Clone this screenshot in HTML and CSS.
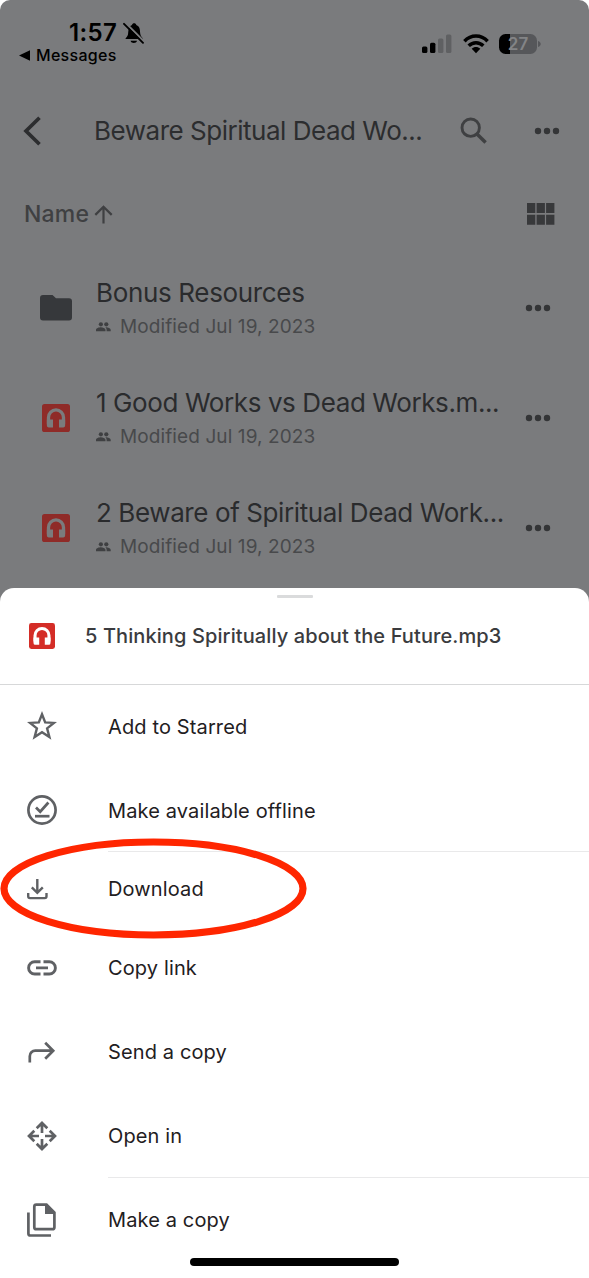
FILE: index.html
```html
<!DOCTYPE html>
<html lang="en">
<head>
<meta charset="utf-8">
<title>Drive</title>
<link rel="stylesheet" href="styles.css">
</head>
<body>
<svg class="defs" aria-hidden="true">
  <symbol id="dots" viewBox="0 0 26 8"><circle cx="4" cy="4" r="3.2"/><circle cx="13" cy="4" r="3.2"/><circle cx="22" cy="4" r="3.2"/></symbol>
  <symbol id="people" viewBox="0 0 15 10"><circle cx="4.9" cy="2.3" r="2.1"/><circle cx="10.3" cy="2.3" r="2.1"/><path d="M0 9.2V7.8C0 6.2 3 5.3 4.9 5.3s4.6.9 4.6 2.5v1.4zM10.600 9.200V7.800c0-1-.4-1.800-1.100-2.400 2-.2 5.200.7 5.200 2.400v1.400z"/></symbol>
  <symbol id="audio" viewBox="0 0 28 28"><rect width="28" height="28" rx="2.6" fill="var(--tile)"/><path d="M6.500 20V13.400a7.500 7.500 0 0 1 15 0V20" fill="none" stroke="var(--mark)" stroke-width="3.300"/><path d="M4.850 15.500H11v8H6.850a2 2 0 0 1-2-2zM17 15.500h6.150v6a2 2 0 0 1-2 2H17z" fill="var(--mark)"/></symbol>
</svg>
<div class="screen">
  <header class="status">
    <div class="status-left">
      <div class="clock"><span class="time">1:57</span>
        <svg width="22" height="23" viewBox="0 0 22 23"><path d="M2.500 17c0-1.500 2-2 2.500-4.500C5.700 8 5 4.500 9 3c.3-2.500 4-2.500 4.300 0 4 1.500 3.500 5 4 9 .3 2.500 2.500 3.500 2.500 5zM7.600 18.700h6.400c-.5 3-5.900 3-6.400 0z" fill="#000"/><path d="M2.400.8l19 19" stroke="#7a7b7d" stroke-width="2"/><path d="M1 1.800l19 19" stroke="#000" stroke-width="1.900" stroke-linecap="round"/></svg>
      </div>
      <div class="back-app"><svg width="12" height="11" viewBox="0 0 12 11"><path d="M0 5.500L11 .3v10.400z"/></svg><span class="msgs">Messages</span></div>
    </div>
    <div class="status-right">
      <svg width="30" height="20" viewBox="0 0 30 20"><rect x="0" y="12.500" width="5.400" height="6.500" rx="1.500"/><rect x="8" y="8.700" width="5.400" height="10.300" rx="1.500"/><g fill="#5f6062"><rect x="16" y="4.500" width="5.400" height="14.500" rx="1.500"/><rect x="24" y=".5" width="5.400" height="18.500" rx="1.500"/></g></svg>
      <svg class="wifi" width="26" height="20" viewBox="0 0 26 20"><g fill="none" stroke="#000" stroke-width="3.500"><path d="M1.400 7.200c6.500-6.800 16.700-6.800 23.200 0"/><path d="M5.700 11.700c4.200-4.100 10.400-4.100 14.600 0"/></g><path d="M8.700 14.700c2.400-2.200 6.200-2.200 8.600 0L13 19.200z"/></svg>
      <div class="battery"><span class="battery-level">27</span></div>
      <svg class="battery-tip" width="3" height="6" viewBox="0 0 3 6"><path d="M0 0c3.600 1 3.600 5 0 6z" fill="#56575a"/></svg>
    </div>
  </header>
  <div class="titlebar">
    <svg class="chevron" width="19" height="30" viewBox="0 0 19 30"><path d="M16.500 1.800L3 15l13.500 13.200" fill="none" stroke="#2c2d2f" stroke-width="3.700"/></svg>
    <h1 class="title">Beware Spiritual Dead Wo...</h1>
    <svg class="search" width="28" height="28" viewBox="0 0 28 28"><circle cx="10.700" cy="10.700" r="8.700" fill="none" stroke="#3f4042" stroke-width="2.900"/><path d="M17 17l8.600 8.600" stroke="#3f4042" stroke-width="3.500"/></svg>
    <svg class="more" width="26" height="8"><use href="#dots"/></svg>
  </div>
  <div class="sortbar">
    <span class="sort">Name</span>
    <svg width="19" height="19" viewBox="0 0 19 19"><path d="M9.500 18.500V2M1.300 9.900L9.500 1.700l8.200 8.200" fill="none" stroke="#3f4042" stroke-width="2.200"/></svg>
    <svg class="grid" width="28" height="22" viewBox="0 0 28 22"><path d="M0 0h8.300v10H0zM9.600 0h8.300v10H9.600zM19.100 0h8.300v10h-8.300zM0 11.700h8.300v10H0zM9.600 11.700h8.300v10H9.600zM19.100 11.700h8.300v10h-8.300z" fill="#38393b"/></svg>
  </div>
  <main class="files">
    <div class="file">
      <svg class="file-icon" width="32" height="26" viewBox="0 0 32 26"><path d="M3 0h9.500L16 3.200h13a3 3 0 0 1 3 3V22.500a3 3 0 0 1-3 3H3a3 3 0 0 1-3-3V3a3 3 0 0 1 3-3z" fill="#36383b"/></svg>
      <div class="file-text"><div class="name n0">Bonus Resources</div><div class="meta"><svg width="15" height="10"><use href="#people"/></svg><span>Modified Jul 19, 2023</span></div></div>
      <svg class="row-more" width="26" height="8"><use href="#dots"/></svg>
    </div>
    <div class="file">
      <svg class="file-icon" width="28" height="28"><use href="#audio"/></svg>
      <div class="file-text"><div class="name">1 Good Works vs Dead Works.m...</div><div class="meta"><svg width="15" height="10"><use href="#people"/></svg><span>Modified Jul 19, 2023</span></div></div>
      <svg class="row-more" width="26" height="8"><use href="#dots"/></svg>
    </div>
    <div class="file">
      <svg class="file-icon" width="28" height="28"><use href="#audio"/></svg>
      <div class="file-text"><div class="name">2 Beware of Spiritual Dead Work...</div><div class="meta"><svg width="15" height="10"><use href="#people"/></svg><span>Modified Jul 19, 2023</span></div></div>
      <svg class="row-more" width="26" height="8"><use href="#dots"/></svg>
    </div>
  </main>
  <section class="sheet">
    <div class="handle"></div>
    <div class="sheet-head"><svg width="26" height="26" viewBox="0 0 28 28"><use href="#audio"/></svg><h2 class="sheet-title">5 Thinking Spiritually about the Future.mp3</h2></div>
    <div class="item"><span class="ico raised"><svg width="30" height="29" viewBox="0 0 30 29"><path d="M15 3.300l3.200 8.100 8.700.5-6.800 5.500 2.300 8.600-7.400-4.800L7.600 26l2.300-8.600-6.800-5.500 8.700-.5z" fill="none" stroke="#5f6164" stroke-width="2.400"/></svg></span><span class="label">Add to Starred</span></div>
    <div class="item ruled"><span class="ico raised"><svg width="30" height="30" viewBox="0 0 30 30" fill="none" stroke="#5f6164"><circle cx="15" cy="15" r="13.600" stroke-width="2.700"/><path d="M9 12.500l4.200 4.200 8.200-9.200" stroke-width="2.700"/><path d="M8 21.200h14.500" stroke-width="2.700"/></svg></span><span class="label">Make available offline</span></div>
    <div class="item short"><span class="ico"><svg width="22" height="22" viewBox="0 0 22 22" fill="none" stroke="#5f6164" stroke-width="2.400"><path d="M10.300 1v13.500M4.800 9.300l5.500 5.500 5.500-5.500M1.200 15v3.300a1.800 1.800 0 0 0 1.800 1.800h14.700a1.800 1.800 0 0 0 1.800-1.800V15"/></svg></span><span class="label">Download</span>
      <svg class="ring" width="308" height="102" viewBox="0 0 308 102"><ellipse cx="153.500" cy="50.500" rx="149.500" ry="46.500" fill="none" stroke="#ff2600" stroke-width="7.200"/></svg></div>
    <div class="item"><span class="ico"><svg width="30" height="16" viewBox="0 0 30 16" fill="none" stroke="#5f6164" stroke-width="2.900"><path d="M13.500 1.800H7.700a6 6 0 0 0 0 12.200h5.800M16.500 1.800h5.800a6 6 0 0 1 0 12.200h-5.800M9 7.900h12"/></svg></span><span class="label">Copy link</span></div>
    <div class="item"><span class="ico"><svg width="30" height="22" viewBox="0 0 30 22" fill="none" stroke="#5f6164" stroke-width="2.700"><path d="M2.800 21.500v-6.300a5.500 5.500 0 0 1 5.500-5.500H26M18.200 1.700l8 8-8 8"/></svg></span><span class="label">Send a copy</span></div>
    <div class="item ruled last-rule"><span class="ico"><svg width="30" height="30" viewBox="0 0 30 30" fill="none" stroke="#5f6164" stroke-width="2.700"><path d="M15 12V2M9.700 7.300L15 2l5.300 5.300M15 18v10M9.700 22.700L15 28l5.300-5.300M12 15H2M7.300 9.700L2 15l5.300 5.300M18 15h10M22.700 9.700L28 15l-5.300 5.300"/></svg></span><span class="label">Open in</span></div>
    <div class="item"><span class="ico"><svg width="30" height="34" viewBox="0 0 30 34"><path d="M9.300 1.600h10.200L27.400 9.500v14.700a2 2 0 0 1-2 2H9.300a2 2 0 0 1-2-2V3.600a2 2 0 0 1 2-2zM1.400 9.500v21a2 2 0 0 0 2 2H24" fill="none" stroke="#5f6164" stroke-width="2.700"/><path d="M18 1v10h10z" fill="#5f6164"/></svg></span><span class="label">Make a copy</span></div>
    <div class="home"></div>
  </section>
</div>
</body>
</html>
```
FILE: styles.css
```css
* { box-sizing: border-box; }
body { margin: 0; background: #fff; font-family: Inter, "Liberation Sans", sans-serif; }
svg { display: block; flex: none; }
h1, h2 { margin: 0; font-weight: 400; }
.defs { position: absolute; width: 0; height: 0; }
.screen { width: 589px; height: 1278px; overflow: hidden; background: #7a7b7d; border-radius: 10px 10px 0 0; --tile: #8f2b28; --mark: #7a7b7d; }
.status { height: 90px; display: flex; justify-content: space-between; padding: 19px 48px 0 19px; }
.clock { display: flex; gap: 6px; height: 28px; align-items: center; padding-left: 50px; }
.time { font-size: 24px; line-height: 28px; font-weight: 600; letter-spacing: 0.4px; }
.back-app { display: flex; align-items: center; gap: 5px; height: 18px; margin-top: -1px; }
.msgs { font-size: 16px; line-height: 18px; font-weight: 500; letter-spacing: 0.3px; }
.status-right { display: flex; align-items: center; height: 50px; }
.wifi { margin: 0 10px 0 11px; }
.battery { width: 38px; height: 20px; border-radius: 6.500px; background: linear-gradient(90deg, #000 11px, #56575a 11px); display: flex; align-items: center; justify-content: center; color: #838486; }
.battery-level { font-size: 17px; font-weight: 600; line-height: 20px; }
.battery-tip { margin-left: 1px; }
.titlebar { height: 80px; display: flex; align-items: center; padding: 1px 29px 0 23px; }
.title { font-size: 26px; line-height: 32px; color: #2c2d2f; white-space: nowrap; width: 365px; padding-left: 52px; letter-spacing: -0.48px; }
.search { margin-left: 53px; }
.more { margin-left: auto; fill: #343537; }
.sortbar { height: 82px; display: flex; align-items: center; padding: 6px 34px 0 24px; gap: 5px; }
.sort { font-size: 23px; line-height: 30px; color: #3f4042; font-weight: 450; letter-spacing: 0.2px; }
.grid { margin-left: auto; }
.files { height: 336px; padding-top: 1px; }
.file { height: 110px; display: grid; grid-template-columns: 56px 1fr 26px; align-items: center; padding: 0 38px 0 28px; }
.file-icon { justify-self: center; }
.file-text { padding-left: 12px; white-space: nowrap; }
.name { font-size: 26px; line-height: 32px; color: #2a2b2d; letter-spacing: -0.4px; }
.n0 { letter-spacing: -0.34px; }
.meta { display: flex; align-items: center; gap: 9px; height: 24px; margin-top: 6px; font-size: 19px; line-height: 24px; letter-spacing: 0.1px; color: #48494b; fill: #3f4042; }
.row-more { fill: #343537; }
.sheet { height: 690px; background: #fff; border-radius: 14px 14px 0 0; --tile: #d42d27; --mark: #fff; display: flex; flex-direction: column; position: relative; }
.handle { width: 36px; height: 3px; margin: 7px auto 0; background: #dadbdc; border-radius: 1px; }
.sheet-head { height: 87px; display: flex; align-items: center; gap: 30px; padding: 0 0 11px 29px; border-bottom: 1px solid #d7d8d9; }
.sheet-title { font-size: 20px; line-height: 28px; font-weight: 500; letter-spacing: 0.1px; color: #3a3b3e; white-space: nowrap; }
.item { height: 84px; flex: none; display: flex; align-items: center; position: relative; padding-left: 27px; color: #1f2022; }
.short { height: 73px; padding-bottom: 1px; }
.ico { width: 81px; }
.raised { margin-top: -3px; }
.label { font-size: 20px; line-height: 28px; letter-spacing: 0.13px; white-space: nowrap; }
.ruled::after { content: ""; position: absolute; left: 108px; right: 0; bottom: 1px; height: 1px; background: #e9e9ea; }
.last-rule::after { bottom: 0; }
.ring { position: absolute; left: 0; top: -15px; z-index: 1; }
.home { width: 209px; height: 8px; border-radius: 4px; background: #000; margin: -4px auto 0; flex: none; position: relative; }
```
